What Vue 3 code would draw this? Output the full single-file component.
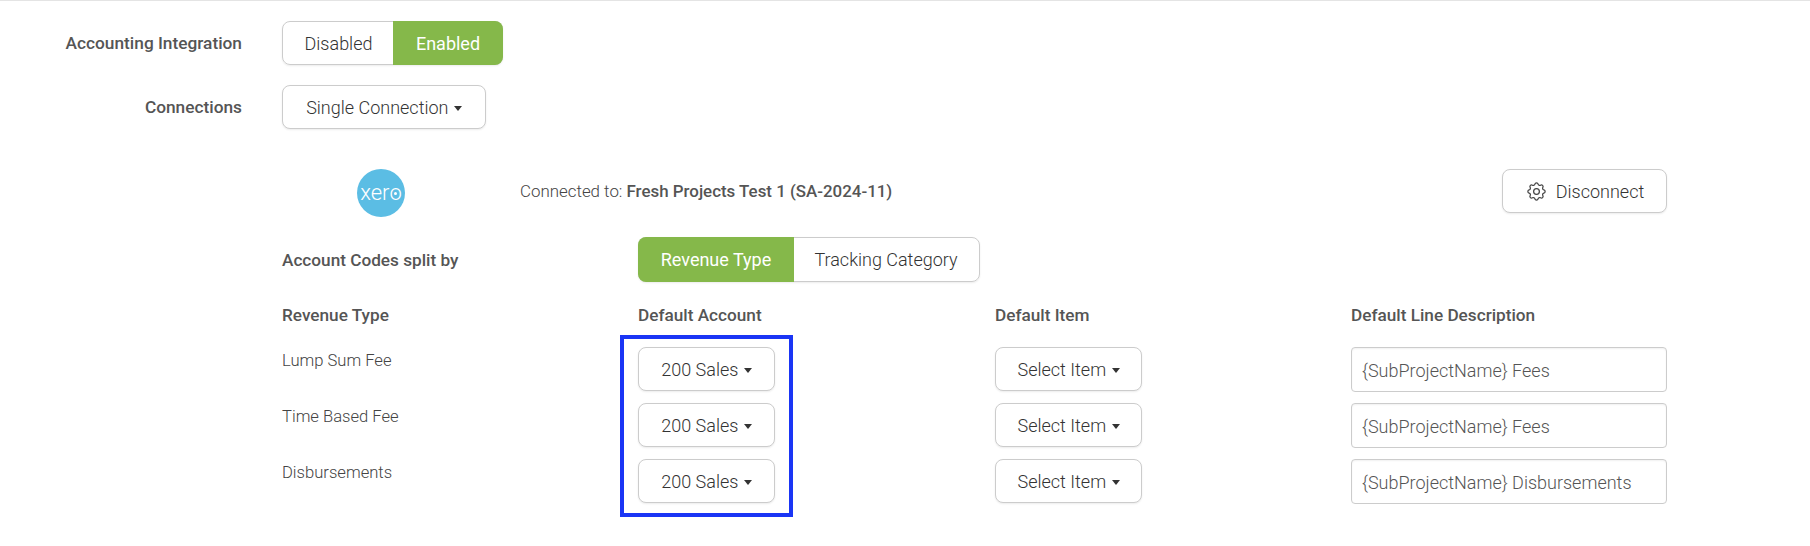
<script setup>
const rows = [
  { name: 'Lump Sum Fee', line: '{SubProjectName} Fees' },
  { name: 'Time Based Fee', line: '{SubProjectName} Fees' },
  { name: 'Disbursements', line: '{SubProjectName} Disbursements' },
]
</script>

<template>
  <main class="page">
    <div class="form-row first">
      <div class="label">Accounting Integration</div>
      <div class="toggle one">
        <button class="seg">Disabled</button>
        <button class="seg on">Enabled</button>
      </div>
    </div>
    <div class="form-row second">
      <div class="label">Connections</div>
      <button class="btn conn">Single Connection <span class="caret"></span></button>
    </div>

    <section class="panel">
      <div class="connection">
        <div class="logo-cell">
          <div class="xero"><span>xer</span><span class="o">o<i></i></span></div>
        </div>
        <div class="connected">Connected to: <b>Fresh Projects Test 1 (SA-2024-11)</b></div>
        <button class="btn disconnect">
          <svg width="23" height="23" viewBox="0 0 24 24" fill="none" stroke="#444" stroke-width="1.3" stroke-linecap="round" stroke-linejoin="round">
            <path d="M10.325 4.317c.426-1.756 2.924-1.756 3.35 0a1.724 1.724 0 0 0 2.573 1.066c1.543-.94 3.31.826 2.37 2.37a1.724 1.724 0 0 0 1.065 2.572c1.756.426 1.756 2.924 0 3.35a1.724 1.724 0 0 0-1.066 2.573c.94 1.543-.826 3.31-2.37 2.37a1.724 1.724 0 0 0-2.572 1.065c-.426 1.756-2.924 1.756-3.35 0a1.724 1.724 0 0 0-2.573-1.066c-1.543.94-3.31-.826-2.37-2.37a1.724 1.724 0 0 0-1.065-2.572c-1.756-.426-1.756-2.924 0-3.35a1.724 1.724 0 0 0 1.066-2.573c-.94-1.543.826-3.31 2.37-2.37c1 .608 2.296.07 2.572-1.065z"/>
            <circle cx="12" cy="12" r="3"/>
          </svg>
          <span>Disconnect</span>
        </button>
      </div>

      <div class="split">
        <div class="head">Account Codes split by</div>
        <div class="toggle two">
          <button class="seg on">Revenue Type</button>
          <button class="seg">Tracking Category</button>
        </div>
      </div>

      <div class="table">
        <div class="highlight"></div>
        <div class="head hrow">Revenue Type</div>
        <div class="head hrow">Default Account</div>
        <div class="head hrow">Default Item</div>
        <div class="head hrow">Default Line Description</div>
        <template v-for="r in rows" :key="r.name">
          <div class="rname">{{ r.name }}</div>
          <div><button class="btn acct">200 Sales <span class="caret"></span></button></div>
          <div><button class="btn item">Select Item <span class="caret"></span></button></div>
          <div class="field">{{ r.line }}</div>
        </template>
      </div>
    </section>
  </main>
</template>

<style>
html, body { background: #fff; margin: 0; }
</style>

<style scoped>
.page {
  width: 1810px;
  height: 546px;
  box-sizing: border-box;
  border-top: 1px solid #e4e4e4;
  padding-top: 20px;
  font-family: Roboto, "Liberation Sans", sans-serif;
  font-size: 18px;
  color: #333;
  background: #fff;
  overflow: hidden;
}
button {
  font: inherit;
  color: inherit;
  background: #fff;
  margin: 0;
  cursor: pointer;
}
.form-row {
  display: flex;
  align-items: center;
  gap: 40px;
}
.second { margin-top: 20px; }
.label {
  width: 242px;
  text-align: right;
  font-weight: 500;
  color: #555;
  font-size: 17.3px;
}
.toggle {
  display: flex;
  height: 44px;
  box-sizing: border-box;
  border: 1px solid #ccc;
  border-radius: 8px;
  box-shadow: 0 1px 2px rgba(0,0,0,.08);
}
.seg {
  border: 0;
  padding: 0;
  background: transparent;
  font-weight: 300;
  white-space: nowrap;
}
.seg.on {
  background: #85b84a;
  color: #fff;
  margin: -1px;
  font-weight: 400;
}
.seg:first-child { border-radius: 8px 0 0 8px; }
.seg:last-child { border-radius: 0 8px 8px 0; }
.one { width: 221px; }
.one .seg { flex: 0 0 111px; }
.one .seg.on { flex: 0 0 110px; }
.btn {
  height: 44px;
  box-sizing: border-box;
  border: 1px solid #ccc;
  border-radius: 8px;
  box-shadow: 0 1px 2px rgba(0,0,0,.08);
  padding: 0;
  font-weight: 300;
  white-space: nowrap;
}
.conn { width: 204px; }
.caret {
  display: inline-block;
  width: 0;
  height: 0;
  margin-left: 1px;
  vertical-align: 3px;
  border-left: 4.5px solid transparent;
  border-right: 4.5px solid transparent;
  border-top: 5px solid #333;
}
.panel {
  width: 1385px;
  margin-left: 282px;
  margin-top: 40px;
}
.connection {
  display: flex;
  align-items: flex-start;
  height: 48px;
}
.logo-cell {
  width: 198px;
  margin-right: 40px;
  display: flex;
  justify-content: center;
}
.xero {
  width: 48px;
  height: 48px;
  border-radius: 50%;
  background: #5bbde4;
  color: #fff;
  display: flex;
  align-items: center;
  justify-content: center;
  font-size: 22px;
  font-weight: 300;
  padding-bottom: 2px;
  box-sizing: border-box;
}
.o { position: relative; }
.o i {
  position: absolute;
  left: 50%;
  top: 50%;
  width: 3px;
  height: 3px;
  margin: 0 0 0 -1.5px;
  border-radius: 50%;
  background: #fff;
}
.connected {
  flex: 1;
  font-weight: 300;
  color: #444;
  font-size: 16.9px;
  line-height: 44px;
}
.connected b { font-weight: 500; color: #555; }
.disconnect {
  width: 165px;
  display: flex;
  align-items: center;
  justify-content: center;
  gap: 8px;
}
.head {
  font-weight: 500;
  color: #555;
  font-size: 17.2px;
}
.split {
  display: grid;
  grid-template-columns: 356px auto;
  justify-content: start;
  align-items: center;
  margin-top: 20px;
}
.two { height: 45px; width: 342px; }
.two .seg { flex: 1 1 auto; }
.two .seg.on { flex: 0 0 156px; }
.table {
  position: relative;
  display: grid;
  grid-template-columns: 356px 357px 356px 316px;
  grid-auto-rows: 44px;
  row-gap: 12px;
  align-items: center;
  margin-top: 9px;
}
.hrow { height: 44px; line-height: 48px; }
.rname {
  font-weight: 300;
  color: #444;
  font-size: 16.6px;
  margin-top: -17px;
}
.acct { width: 137px; }
.item { width: 147px; }
.field {
  height: 45px;
  box-sizing: border-box;
  border: 1px solid #ccc;
  border-radius: 4px;
  box-shadow: inset 0 1px 2px rgba(0,0,0,.06);
  padding: 0 10px;
  line-height: 45px;
  font-weight: 300;
  color: #555;
}
.highlight {
  position: absolute;
  left: 338px;
  top: 44px;
  width: 173px;
  height: 182px;
  box-sizing: border-box;
  border: 4px solid #1a35f5;
  pointer-events: none;
}
</style>
